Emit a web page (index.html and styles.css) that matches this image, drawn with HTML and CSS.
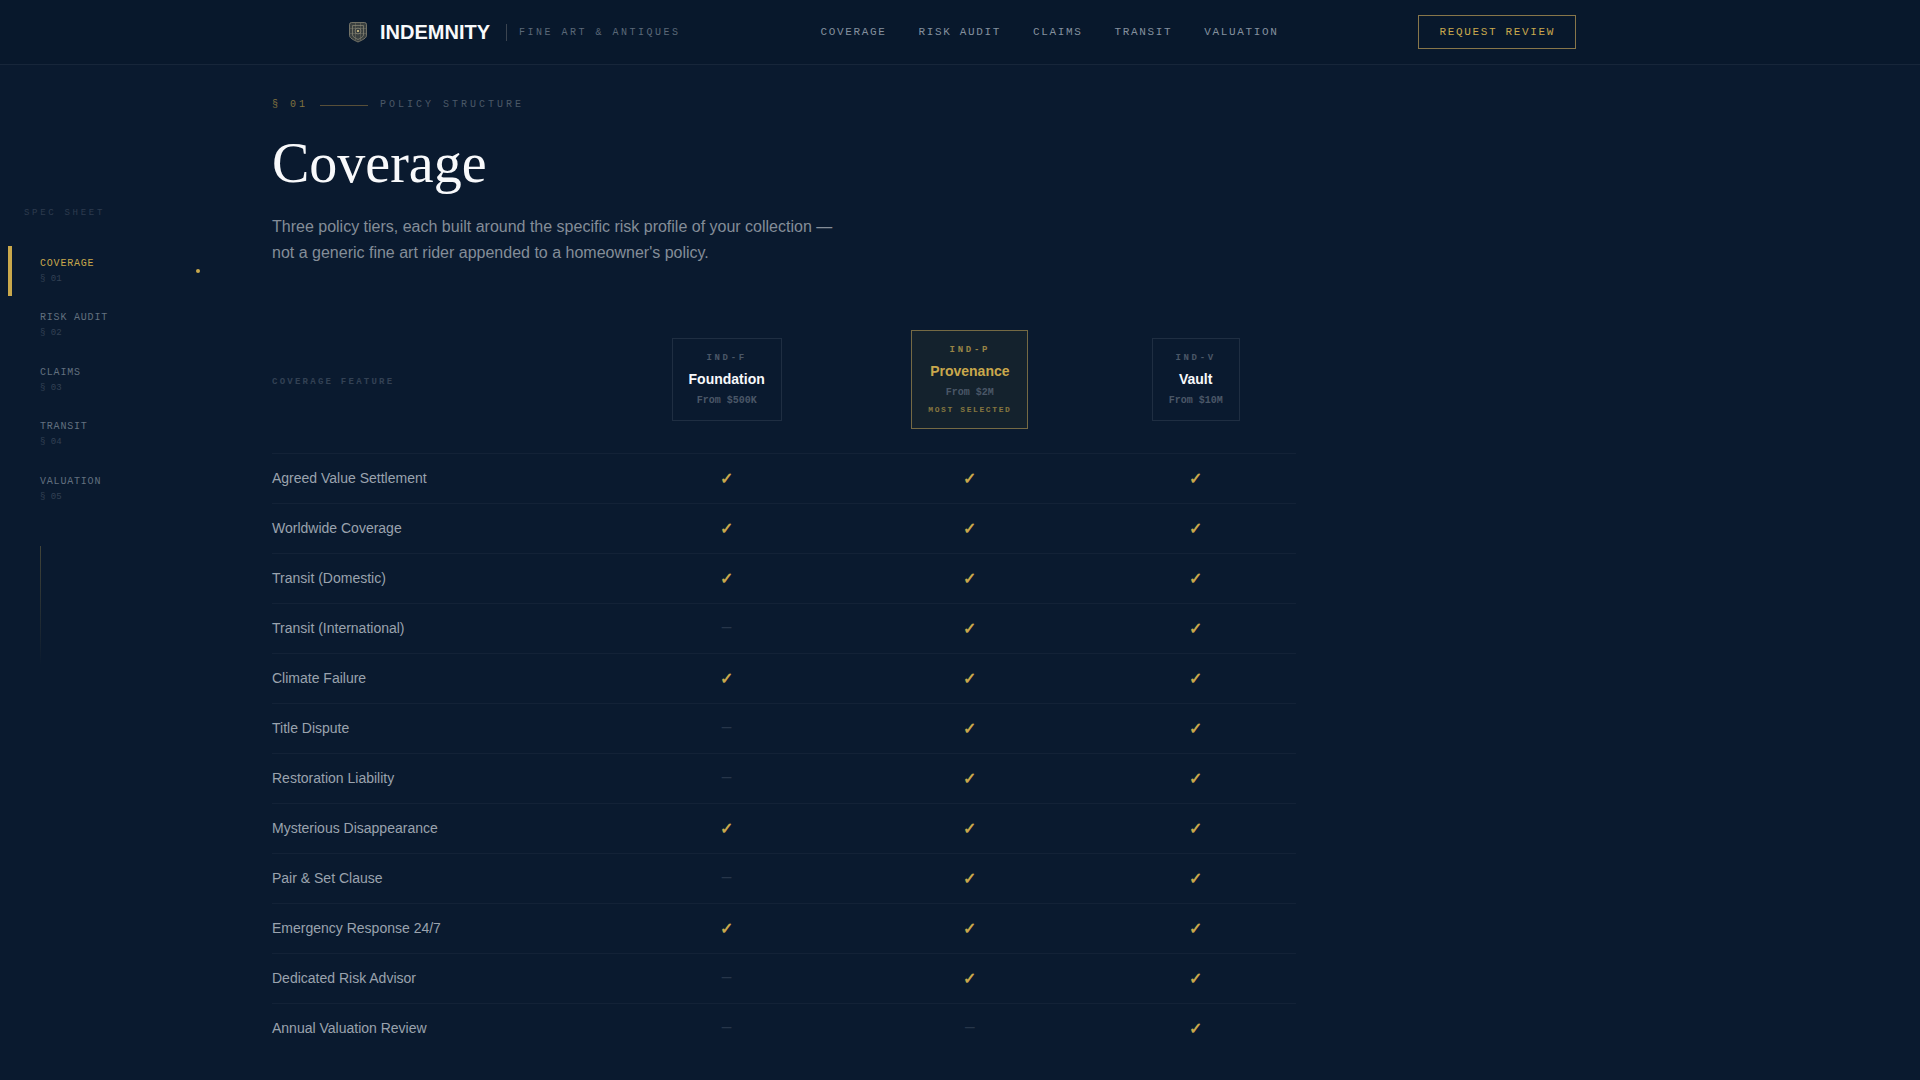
FILE: index.html
```html
<!DOCTYPE html>
<html lang="en">
<head>
  <meta charset="UTF-8" />
  <meta name="viewport" content="width=device-width, initial-scale=1.0" />
  <title>Indemnity | Fine Art &amp; Antiques</title>
  <link rel="stylesheet" href="styles.css">
</head>
<body>
  <header class="topbar">
    <div class="topbar-inner">
      <a class="brand" href="#">
        <svg class="brand-mark" viewBox="0 0 28 28" fill="none" stroke="#8d8a78" aria-hidden="true">
          <path d="M7.500 4.500h13a2 2 0 0 1 2 2V17.500c0 2.500-4 4.500-8.500 6.500-4.500-2-8.500-4-8.500-6.500V6.500a2 2 0 0 1 2-2z" fill="#3a4040" stroke-opacity=".75" />
          <path d="M8.500 7.500h11v9.500c0 1.500-2.500 3-5.500 4.500-3-1.500-5.500-3-5.500-4.500z" stroke-opacity=".7" />
          <path d="M6 10.500h16M6 15.500h16M11.500 5v17M16.500 5v17" stroke-opacity=".35" />
          <circle cx="14" cy="13" r="3" stroke-opacity=".6" />
          <circle cx="14" cy="13" r="1" fill="#e5cf8c" stroke="none" />
        </svg>
        <span class="brand-name">INDEMNITY</span>
        <span class="brand-tag">FINE ART &amp; ANTIQUES</span>
      </a>
      <nav class="topnav">
        <a href="#coverage">COVERAGE</a>
        <a href="#risk">RISK AUDIT</a>
        <a href="#claims">CLAIMS</a>
        <a href="#transit">TRANSIT</a>
        <a href="#valuation">VALUATION</a>
      </nav>
      <button class="cta" type="button">REQUEST REVIEW</button>
    </div>
  </header>

  <div class="layout">
    <aside class="sidebar">
      <div class="sidebar-title">SPEC SHEET</div>
      <nav class="spec-nav">
        <a class="spec-link active" href="#coverage"><span>COVERAGE</span><small>§ 01</small></a>
        <a class="spec-link" href="#risk"><span>RISK AUDIT</span><small>§ 02</small></a>
        <a class="spec-link" href="#claims"><span>CLAIMS</span><small>§ 03</small></a>
        <a class="spec-link" href="#transit"><span>TRANSIT</span><small>§ 04</small></a>
        <a class="spec-link" href="#valuation"><span>VALUATION</span><small>§ 05</small></a>
      </nav>
      <div class="sidebar-line"></div>
    </aside>

    <main class="content" id="coverage">
      <div class="eyebrow">
        <span class="eyebrow-num">§ 01</span>
        <span class="eyebrow-line"></span>
        <span>POLICY STRUCTURE</span>
      </div>
      <h1>Coverage</h1>
      <p class="description">Three policy tiers, each built around the specific risk profile of your collection — not a generic fine art rider appended to a homeowner's policy.</p>

      <table class="tiers">
        <colgroup>
          <col class="col-feature">
          <col class="col-foundation">
          <col class="col-provenance">
          <col class="col-vault">
        </colgroup>
        <thead>
          <tr>
            <th class="feature-head" scope="col">COVERAGE FEATURE</th>
            <th scope="col">
              <div class="tier">
                <div class="tier-code">IND-F</div>
                <div class="tier-name">Foundation</div>
                <div class="tier-from">From $500K</div>
              </div>
            </th>
            <th scope="col">
              <div class="tier featured">
                <div class="tier-code">IND-P</div>
                <div class="tier-name">Provenance</div>
                <div class="tier-from">From $2M</div>
                <div class="tier-flag">MOST SELECTED</div>
              </div>
            </th>
            <th scope="col">
              <div class="tier">
                <div class="tier-code">IND-V</div>
                <div class="tier-name">Vault</div>
                <div class="tier-from">From $10M</div>
              </div>
            </th>
          </tr>
        </thead>
        <tbody>
          <tr><td>Agreed Value Settlement</td><td class="yes">✓</td><td class="yes">✓</td><td class="yes">✓</td></tr>
          <tr><td>Worldwide Coverage</td><td class="yes">✓</td><td class="yes">✓</td><td class="yes">✓</td></tr>
          <tr><td>Transit (Domestic)</td><td class="yes">✓</td><td class="yes">✓</td><td class="yes">✓</td></tr>
          <tr><td>Transit (International)</td><td class="no">—</td><td class="yes">✓</td><td class="yes">✓</td></tr>
          <tr><td>Climate Failure</td><td class="yes">✓</td><td class="yes">✓</td><td class="yes">✓</td></tr>
          <tr><td>Title Dispute</td><td class="no">—</td><td class="yes">✓</td><td class="yes">✓</td></tr>
          <tr><td>Restoration Liability</td><td class="no">—</td><td class="yes">✓</td><td class="yes">✓</td></tr>
          <tr><td>Mysterious Disappearance</td><td class="yes">✓</td><td class="yes">✓</td><td class="yes">✓</td></tr>
          <tr><td>Pair &amp; Set Clause</td><td class="no">—</td><td class="yes">✓</td><td class="yes">✓</td></tr>
          <tr><td>Emergency Response 24/7</td><td class="yes">✓</td><td class="yes">✓</td><td class="yes">✓</td></tr>
          <tr><td>Dedicated Risk Advisor</td><td class="no">—</td><td class="yes">✓</td><td class="yes">✓</td></tr>
          <tr><td>Annual Valuation Review</td><td class="no">—</td><td class="no">—</td><td class="yes">✓</td></tr>
        </tbody>
      </table>
    </main>
  </div>
</body>
</html>
```
FILE: styles.css
```css
:root {
  --navy: #0a1a2f;
  --navy-dark: #08182c;
  --gold: #c9a84c;
  --mono: "Liberation Mono", monospace;
}

* {
  margin: 0;
  padding: 0;
  box-sizing: border-box;
}

body {
  background: var(--navy);
  color: #f8f9fb;
  font-family: "Liberation Sans", sans-serif;
  font-size: 16px;
  line-height: 24px;
}

a {
  color: inherit;
  text-decoration: none;
}

/* top bar */
.topbar {
  position: sticky;
  top: 0;
  z-index: 2;
  background: var(--navy-dark);
  border-bottom: 1px solid #17263a;
}

.topbar-inner {
  display: flex;
  align-items: center;
  justify-content: space-between;
  max-width: 1280px;
  height: 64px;
  margin: 0 auto;
  padding: 0 24px;
}

.brand {
  display: flex;
  align-items: center;
}

.brand-mark {
  width: 28px;
  height: 28px;
  margin-right: 8px;
}

.brand-name {
  font-size: 20px;
  font-weight: 700;
}

.brand-tag {
  margin-left: 16px;
  padding-left: 12px;
  border-left: 1px solid #3b4450;
  color: #5b6878;
  font-family: var(--mono);
  font-size: 10px;
  line-height: 17px;
  letter-spacing: 0.25em;
}

.topnav {
  display: flex;
  gap: 32px;
  color: #84909e;
  font-family: var(--mono);
  font-size: 11px;
  letter-spacing: 0.15em;
}

.cta {
  height: 34px;
  padding: 0 20px;
  background: transparent;
  border: 1px solid #87764a;
  color: var(--gold);
  font-family: var(--mono);
  font-size: 11px;
  letter-spacing: 0.15em;
  cursor: pointer;
}

.layout {
  display: grid;
  grid-template-columns: 208px minmax(0, 1fr);
}

/* side index */
.sidebar {
  position: sticky;
  top: 65px;
  align-self: start;
  padding: 142px 8px 0;
  font-family: var(--mono);
}

.sidebar-title {
  padding-left: 16px;
  margin-bottom: 25px;
  color: #2d3b4e;
  font-size: 9px;
  line-height: 1.5;
  letter-spacing: 0.3em;
}

.spec-nav {
  display: flex;
  flex-direction: column;
  gap: 4px;
}

.spec-link {
  display: block;
  position: relative;
  padding: 10px 28px;
  border-left: 4px solid transparent;
  color: #62707f;
  font-size: 10px;
  line-height: 1.5;
  letter-spacing: 0.08em;
}

.spec-link span,
.spec-link small {
  display: block;
}

.spec-link small {
  margin-top: 2px;
  color: #334154;
  font-size: 9px;
  letter-spacing: 0;
}

.spec-link.active {
  border-left-color: var(--gold);
  color: var(--gold);
}

.spec-link.active::after {
  content: "";
  position: absolute;
  top: 50%;
  right: 0;
  width: 4px;
  height: 4px;
  border-radius: 50%;
  background: var(--gold);
  transform: translateY(-50%);
}

.sidebar-line {
  width: 1px;
  height: 120px;
  margin: 32px 0 0 32px;
  background: linear-gradient(to bottom, rgba(201, 168, 76, 0.3), transparent);
}

/* main section */
.content {
  padding: 32px 64px 0;
}

.eyebrow {
  display: flex;
  align-items: center;
  gap: 12px;
  color: #4a5867;
  font-family: var(--mono);
  font-size: 10px;
  line-height: 16px;
  letter-spacing: 0.3em;
}

.eyebrow-num {
  color: #83733f;
}

.eyebrow-line {
  width: 48px;
  height: 1px;
  background: #584f39;
}

h1 {
  margin: 22px 0 23px;
  font-family: "Liberation Serif", serif;
  font-size: 56px;
  font-weight: 400;
  line-height: 56px;
}

.description {
  max-width: 576px;
  color: #848d98;
  line-height: 26px;
}

/* tier comparison */
.tiers {
  width: 100%;
  max-width: 1024px;
  margin-top: 64px;
  border-collapse: collapse;
  table-layout: fixed;
}

.col-feature {
  width: 32.9%;
}

.col-foundation {
  width: 23%;
}

.col-provenance {
  width: 24.5%;
}

.col-vault {
  width: 19.6%;
}

.tiers th {
  padding-bottom: 24px;
  text-align: center;
}

.tiers .feature-head {
  padding-bottom: 20px;
  color: #334154;
  font-family: var(--mono);
  font-size: 9px;
  letter-spacing: 0.25em;
  text-align: left;
}

.tier {
  display: inline-block;
  padding: 12px 16px;
  border: 1px solid #1f2e42;
  font-family: var(--mono);
  vertical-align: middle;
}

.tier-code {
  color: #4a5767;
  font-size: 9px;
  line-height: 14px;
  letter-spacing: 0.3em;
}

.tier-name {
  margin: 4px 0;
  color: #f8f9fb;
  font-family: "Liberation Sans", sans-serif;
  font-size: 14px;
  line-height: 20px;
}

.tier-from {
  color: #4a5767;
  font-size: 10px;
  line-height: 15px;
}

.tier-flag {
  margin-top: 4px;
  color: #85763f;
  font-size: 8px;
  line-height: 12px;
  letter-spacing: 0.2em;
}

.tier.featured {
  background: #14222d;
  border-color: #756a44;
}

.featured .tier-code {
  color: #9a8546;
}

.featured .tier-name {
  color: var(--gold);
}

.tiers tbody tr {
  border-top: 1px solid #132237;
}

.tiers td {
  height: 50px;
  color: #9aa3ae;
  font-size: 14px;
  line-height: 17px;
}

.tiers .yes,
.tiers .no {
  text-align: center;
}

.tiers .yes {
  color: var(--gold);
  font-size: 16px;
  font-weight: 700;
}

.tiers .no {
  color: #27364a;
  font-family: var(--mono);
  font-size: 16px;
}
```
